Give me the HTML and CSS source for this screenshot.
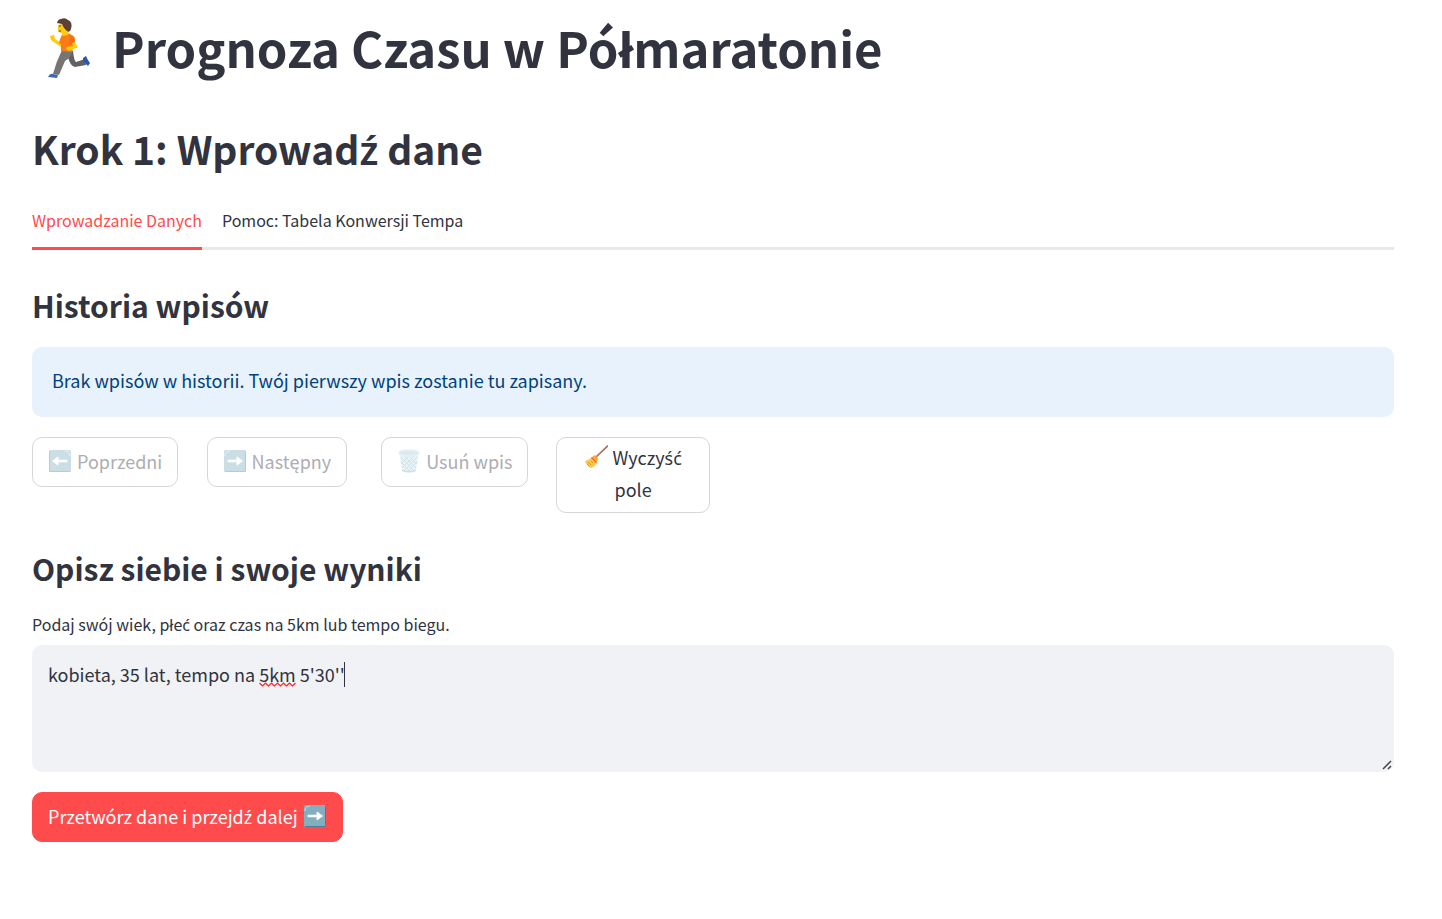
FILE: index.html
```html
<!DOCTYPE html>
<html lang="pl">
<head>
<meta charset="utf-8">
<meta name="viewport" content="width=device-width, initial-scale=1">
<title>Prognoza Czasu w Półmaratonie</title>
<link rel="stylesheet" href="styles.css">
</head>
<body>
<svg width="0" height="0" class="defs" aria-hidden="true">
  <defs>
    <symbol id="arrow" viewBox="0 0 24 24">
      <rect x="1" y="1" width="22" height="22" rx="1.5" fill="#82aec0"/>
      <path d="M2.500 23H21.5Q23 23 23 21.500V2L22 2V22H2Z" fill="#4e7e95"/>
      <path d="M2 7Q2 2 7 2" fill="none" stroke="#b9e4ea" stroke-width="1"/>
      <path d="M5 11.200H14V8L19.500 12L14 16V12.800H5Z" fill="#fff" stroke="#fff" stroke-linejoin="round"/>
    </symbol>
  </defs>
</svg>
<main class="page">
  <h1 class="title">
    <svg class="runner" viewBox="0 0 60 75" aria-hidden="true">
      <path d="M24 41L33 41Q34 51 36 52L45 49L46 55L35 57Q30 56 28 47Z" fill="#616161"/>
      <path d="M22 40L32 42Q31 48 25 51L19 65L13 64Q16 52 22 40Z" fill="#757575"/>
      <path d="M43 48L46 46Q48 51 50 53L48 56L43 51Z" fill="#2a56b0"/>
      <path d="M13 64L18 65L17 68L8 67Q10 63 13 64Z" fill="#4068b2"/>
      <path d="M10 26L14 25L15 29L23 34L21 37L11 30Z" fill="#ffca0f"/>
      <path d="M22 25L26 22L32 25Q37 27 34 35L32 42L21 41L21 32Z" fill="#fb7c17"/>
      <path d="M20 29L22 25L27 23L26 29L22 35L19 33Z" fill="#fb7c17"/>
      <path d="M30 26Q34 25 35 33L29 35Z" fill="#f56b16"/>
      <path d="M32 33L35 32L37 36Q38 38 36 38L29 41L26 39L27 37L33 36Z" fill="#ffca0f"/>
      <path d="M18 15L25 13L29 18L28 25L23 26L22 23L18 22Z" fill="#ffca0f"/>
      <path d="M17 13Q18 9 21 9Q25 7 28 10Q33 12 31 19Q30 23 27 21L24 18L22 14Z" fill="#5d4037"/>
      <path d="M19 16H21M19 21H21" stroke="#5d4037"/>
    </svg>
    <span>Prognoza Czasu w Półmaratonie</span>
  </h1>
  <h2 class="step">Krok 1: Wprowad<span class="ext">ź</span> dane</h2>

  <nav class="tabs">
    <button type="button" class="tab tab-active">Wprowadzanie Danych</button>
    <button type="button" class="tab">Pomoc: Tabela Konwersji Tempa</button>
  </nav>

  <h3 class="section">Historia wpisów</h3>
  <p class="notice">Brak wpisów w historii. Twój pierwszy wpis zostanie tu zapisany.</p>

  <div class="actions">
    <div><button type="button" class="btn" disabled><svg class="icon flip" aria-hidden="true"><use href="#arrow"/></svg><span>Poprzedni</span></button></div>
    <div><button type="button" class="btn" disabled><svg class="icon" aria-hidden="true"><use href="#arrow"/></svg><span>Następny</span></button></div>
    <div><button type="button" class="btn" disabled><svg class="icon" viewBox="0 0 24 24" aria-hidden="true">
      <path d="M2.500 4L5 21Q12 25 19 21L21.500 4Z" fill="#c5e3ea"/>
      <path d="M4 8L17 22M7 7L19 19M12 7L20 15M3.500 12L13 23M20 8L7 22M17 7L5 19M12 7L4 15M20.500 12L11 23" stroke="#82aec0" stroke-width=".8" fill="none"/>
      <path d="M5 20.500Q12 24 19 20.500V22Q12 25 5 22Z" fill="#82aec0"/>
      <ellipse cx="12" cy="4" rx="10" ry="3" fill="#a9cbd5" stroke="#b9e4ea" stroke-width="1.500"/>
    </svg><span>Usuń wpis</span></button></div>
    <div><button type="button" class="btn btn-wrap"><svg class="icon" viewBox="0 0 24 24" aria-hidden="true">
      <path d="M12 12L23.500 1" stroke="#a5694f" stroke-width="1.600" stroke-linecap="round"/>
      <path d="M8 12L13 17Q12 21 7 23Q2 20 1 16Q5 15 8 12Z" fill="#fdc846"/>
      <path d="M4 17L7 20M7 16L9 18M3 19L6 22" stroke="#e59a1e" fill="none"/>
      <path d="M8 12L11 10L14 13L13 17Z" fill="#ffa726"/>
      <path d="M7.500 12.500L12.500 17.500" stroke="#ef5a3c" stroke-width="1.200"/>
    </svg> Wyczy<span class="ext">ść</span> pole</button></div>
  </div>

  <h3 class="section">Opisz siebie i swoje wyniki</h3>
  <label class="label" for="opis">Podaj swój wiek, płe<span class="ext">ć</span> oraz czas na 5km lub tempo biegu.</label>
  <div class="field">
    <textarea id="opis" class="input" spellcheck="false">kobieta, 35 lat, tempo na 5km 5'30''</textarea>
    <svg class="squiggle" viewBox="0 0 36 5" aria-hidden="true"><path d="M0 1L3 4L6 1L9 4L12 1L15 4L18 1L21 4L24 1L27 4L30 1L33 4L36 1" fill="none" stroke="#f22" stroke-width="1.200"/></svg>
    <span class="caret"></span>
    <svg class="grip" viewBox="0 0 10 10" aria-hidden="true"><path d="M1 9L9 1M6 9L9 6" fill="none" stroke="#444" stroke-width="1.500"/></svg>
  </div>
  <button type="button" class="btn btn-primary"><span>Przetwórz dane i przejd<span class="ext">ź</span> dalej</span><svg class="icon" aria-hidden="true"><use href="#arrow"/></svg></button>
</main>
</body>
</html>
```
FILE: styles.css
```css
* { box-sizing: border-box; }
body {
  margin: 0;
  background: #fff;
  color: #31333f;
  font: 18px/32px "Noto Sans CJK SC", "Noto Sans", sans-serif;
}
h1, h2, h3, p { margin: 0; }
button, textarea { font: inherit; color: inherit; }
/* Accented letters that the main family does not carry */
.ext { font-family: "Noto Sans", sans-serif; line-height: 1; }
.defs { position: absolute; }
.page { padding: 7px 48px 32px 32px; }
.title {
  display: flex;
  align-items: center;
  gap: 12px;
  font-size: 49px;
  line-height: 80px;
  font-weight: 700;
}
.runner { width: 60px; height: 75px; margin-left: 8px; flex: none; }
.step { margin-top: 33px; font-size: 39px; line-height: 56px; font-weight: 600; }
.tabs {
  display: flex;
  gap: 20px;
  margin-top: 21px;
  border-bottom: 3px solid #e9e9eb;
}
.tab {
  height: 53px;
  margin-bottom: -3px;
  padding: 0 0 4px;
  border: 0;
  border-bottom: 3px solid transparent;
  background: none;
  font-size: 16px;
  line-height: 28px;
}
.tab-active { color: #ff4b4b; border-color: #ff4b4b; }
.section { margin-top: 34px; font-size: 30px; line-height: 42px; font-weight: 600; }
.notice {
  margin-top: 21px;
  padding: 17px 20px 21px;
  border-radius: 10px;
  background: #e8f2fc;
  color: #004280;
}
.actions {
  display: grid;
  grid-template-columns: repeat(4, 154fr) 661fr;
  gap: 20px;
  margin-top: 20px;
}
.btn {
  display: inline-flex;
  align-items: center;
  gap: 5px;
  min-height: 50px;
  padding: 6px 15px 8px;
  border: 1px solid #d6d6d9;
  border-radius: 10px;
  background: #fff;
  white-space: nowrap;
}
.btn:disabled { color: #adadb2; }
.btn:disabled .icon { opacity: .4; }
.btn-wrap { display: block; width: 100%; padding: 3px 15px 7px; white-space: normal; }
.btn-wrap .icon { display: inline-block; vertical-align: -4px; }
.icon { width: 24px; height: 24px; flex: none; }
.flip { transform: scaleX(-1); }
.label { display: block; margin-top: 21px; font-size: 16px; line-height: 28px; }
.field { position: relative; margin-top: 7px; }
.input {
  display: block;
  width: 100%;
  height: 127px;
  padding: 13px 16px;
  border: 0;
  border-radius: 10px;
  outline: 0;
  background: #f0f2f6;
  resize: none;
}
.squiggle { position: absolute; left: 227px; top: 37px; width: 37px; height: 5px; }
.caret { position: absolute; left: 312px; top: 17px; width: 1px; height: 25px; background: #31333f; }
.grip { position: absolute; right: 2px; bottom: 2px; width: 10px; height: 10px; }
.btn-primary { margin-top: 20px; border-color: #ff4b4b; background: #ff4b4b; color: #fff; }
```
